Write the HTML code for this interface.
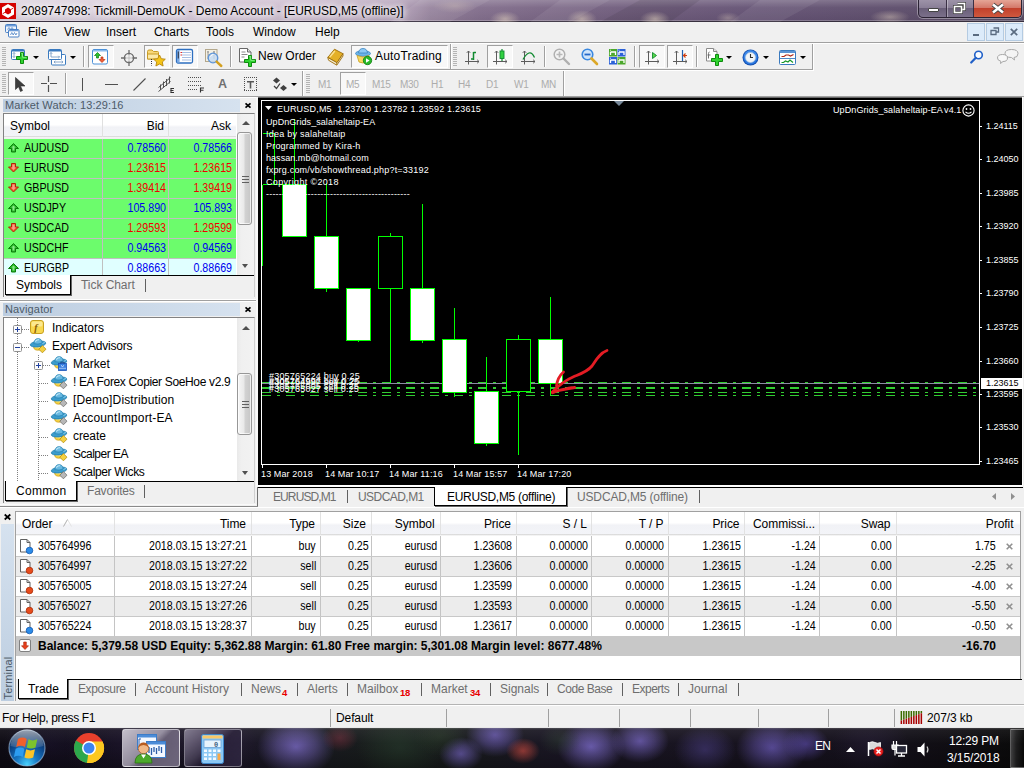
<!DOCTYPE html>
<html><head><meta charset="utf-8"><title>MT4</title>
<style>
*{box-sizing:border-box;margin:0;padding:0}
html,body{width:1024px;height:768px;overflow:hidden;background:#f0f0f0}
body{font-family:"Liberation Sans",sans-serif;font-size:12px;color:#000;position:relative}
.abs,.abs *{position:absolute}
.t{white-space:nowrap;line-height:14px}
/* title */
#title{left:0;top:0;width:1024px;height:22px;border-bottom:1px solid #3a3242;box-shadow:inset 0 -2px 0 -1px rgba(255,255,255,.28);background:linear-gradient(90deg,#dcd2de 0,#d6c8d8 180px,#cbbacd 300px,#b5a2ba 395px,#927e99 430px,#826e8c 480px,#7a6685 540px,#6e5b7b 640px,#645274 760px,#5d4d6b 900px,#574961 1024px)}
#menubar{left:0;top:22px;width:1024px;height:21px;background:#f0f0f0}
#tb1{left:0;top:0;width:1024px;height:0}
#tb2{left:0;top:0;width:1024px;height:0}
#chart{left:0;top:0;width:1024px;height:0}
#ctabs{left:0;top:0;width:1024px;height:0}
#mw{left:0;top:0;width:258px;height:0}
#nav{left:0;top:0;width:258px;height:0}
#term{left:0;top:0;width:1024px;height:0}
#status{left:0;top:0;width:1024px;height:0}
#taskbar{left:0;top:0;width:1024px;height:0}

.pb{background:#f8f8f8;border:1px solid;border-color:#a0a0a0 #fff #fff #a0a0a0}
.grip{width:4px;background:repeating-linear-gradient(180deg,#b4b4b4 0,#b4b4b4 1px,#f0f0f0 1px,#f0f0f0 2px)}
.vsep{width:2px;border-left:1px solid #a0a0a0;border-right:1px solid #fff}
.dd{width:0;height:0;border:3px solid transparent;border-top:3px solid #000;border-bottom:0}
.tf{color:#acacac;font-size:10px;line-height:12px;white-space:nowrap;letter-spacing:-.3px}
svg{overflow:visible}
.mb{width:18px;height:18px;background:#dcebfa;border:1px solid #b4cbe2}
.sbv{width:17px;background:linear-gradient(90deg,#e9e9e9,#f0f0f0 25%,#f2f2f2)}
.sbt{left:0;width:15px;border:1px solid #979797;border-radius:3px;background:linear-gradient(90deg,#f6f6f6 0,#e9e9e9 45%,#d2d2d2 55%,#c6c6c6 100%);box-shadow:inset 0 0 0 1px rgba(255,255,255,.7)}
.sbg{left:4px;width:7px;height:7px;background:repeating-linear-gradient(180deg,#606060 0,#606060 1px,transparent 1px,transparent 3px)}
.sbu{left:5px;width:0;height:0;border:4px solid transparent;border-bottom:4px solid #505050;border-top:0}
.sbd{left:5px;width:0;height:0;border:3.5px solid transparent;border-top:4px solid #505050;border-bottom:0}
.r{font-size:12.2px;transform:scaleX(.875);transform-origin:100% 50%}
.r.gl{transform-origin:0 50%}
.n{font-size:12px;letter-spacing:-.35px}
.c{color:#fff;font-size:9px;line-height:12px;letter-spacing:.2px}
.pl{letter-spacing:0}
.g{font-size:12.2px;transform:scaleX(.875);transform-origin:100% 50%}
.g.gl{transform-origin:0 50%}
</style></head><body>
<div class="abs" id="title">
<svg style="left:0;top:0" width="1024" height="22"><defs><radialGradient id="bl"><stop offset="0" stop-color="#e4d4c0" stop-opacity=".55"/><stop offset="1" stop-color="#e4d4c0" stop-opacity="0"/></radialGradient><linearGradient id="tg" x1="0" y1="0" x2="0" y2="1"><stop offset="0" stop-color="#fff" stop-opacity=".22"/><stop offset=".35" stop-color="#fff" stop-opacity=".04"/><stop offset="1" stop-color="#000" stop-opacity=".05"/></linearGradient></defs>
<rect x="0" y="0" width="1024" height="22" fill="url(#tg)"/>
<path d="M420 0h70l-40 22h-60zM560 0h50l-40 22h-40zM760 0h60l-40 22h-50z" fill="#fff" opacity=".07"/>
<path d="M640 0h60l-30 22h-70z" fill="#000" opacity=".08"/>
<ellipse cx="505" cy="19" rx="15" ry="8" fill="url(#bl)"/><ellipse cx="582" cy="19" rx="15" ry="9" fill="url(#bl)"/><ellipse cx="655" cy="19" rx="15" ry="8" fill="url(#bl)"/><ellipse cx="455" cy="6" rx="22" ry="7" fill="url(#bl)" opacity=".5"/><ellipse cx="728" cy="18" rx="12" ry="6" fill="url(#bl)" opacity=".6"/><ellipse cx="890" cy="17" rx="20" ry="7" fill="url(#bl)" opacity=".8"/>
</svg>
<svg style="left:0;top:3px" width="16" height="16" viewBox="0 0 16 16"><rect x="0" y="0" width="16" height="16" fill="#d40000"/><path d="M8 1 L14 4.5 V11.5 L8 15 L2 11.5 V4.5 Z M8 4.6 L5 6.4 V9.8 L8 11.6 L11 9.8 V6.4 Z" fill="#fff" fill-rule="evenodd"/><path d="M2.6 10.8 L5.2 9.2 M10.8 6.6 L13.4 5.0" stroke="#d40000" stroke-width="0.9"/></svg>
<span class="t" style="left:21px;top:4px;font-size:12px;letter-spacing:-.04px;text-shadow:0 0 6px #fff,0 0 6px #fff,0 0 9px #fff">2089747998: Tickmill-DemoUK - Demo Account - [EURUSD,M5 (offline)]</span>
<div style="left:918px;top:0;width:104px;height:18px;border:1px solid #2b2334;border-top:0;border-radius:0 0 5px 5px;background:linear-gradient(180deg,#9d93a8 0,#8a7f97 45%,#6a5f79 50%,#7b708a 100%);box-shadow:0 0 0 1px rgba(255,255,255,.35)">
 <div style="left:27px;top:0;width:1px;height:17px;background:#3a3045"></div><div style="left:28px;top:0;width:1px;height:17px;background:rgba(255,255,255,.35)"></div>
 <div style="left:54px;top:0;width:1px;height:17px;background:#3a3045"></div>
 <div style="left:55px;top:0;width:47px;height:17px;border-radius:0 0 4px 0;background:linear-gradient(180deg,#e5a596 0,#d4796a 45%,#c2412c 50%,#d0583e 100%)"></div>
 <div style="left:9px;top:8px;width:11px;height:4px;background:#fff;border:1px solid #444;border-radius:1px"></div>
 <svg style="left:34px;top:2px" width="14" height="12" viewBox="0 0 14 12"><path d="M4.5 1.5h7v6h-2M1.5 4.5h7v6h-7z" fill="none" stroke="#444" stroke-width="3"/><path d="M4.5 1.5h7v6h-2M1.5 4.5h7v6h-7z" fill="none" stroke="#fff" stroke-width="1.6"/></svg>
 <svg style="left:72px;top:3px" width="14" height="11" viewBox="0 0 14 11"><path d="M2 1.5 L12 9.5 M12 1.5 L2 9.5" stroke="#444" stroke-width="4.2"/><path d="M2 1.5 L12 9.5 M12 1.5 L2 9.5" stroke="#fff" stroke-width="2.6"/></svg>
</div>
</div>
<div class="abs" id="menubar">
<svg style="left:5px;top:1px" width="15" height="15" viewBox="0 0 15 15"><rect x=".5" y="1.500" width="11" height="8" rx="1" fill="#eef4fb" stroke="#4a80c4"/><path d="M1 2h10v1.500H1z" fill="#6c9cd8"/><path d="M2.500 6.500l1.500-2 1.500 2 1.500-2 1.500 2" fill="none" stroke="#4a80c4" stroke-width=".8"/><rect x="3.500" y="6.500" width="10.500" height="7.500" rx="1" fill="#fff" stroke="#4a80c4"/><path d="M4 7h9.500v1.300H4z" fill="#6c9cd8"/><path d="M5.500 12l1.300-2.500 1.400 2.500 1.300-2.500 1.400 2.500 1.100-2" fill="none" stroke="#4a80c4" stroke-width=".8"/></svg>
<span class="t" style="left:28px;top:3px">File</span><span class="t" style="left:64px;top:3px">View</span><span class="t" style="left:106px;top:3px">Insert</span><span class="t" style="left:154px;top:3px">Charts</span><span class="t" style="left:206px;top:3px">Tools</span><span class="t" style="left:253px;top:3px">Window</span><span class="t" style="left:315px;top:3px">Help</span>
<div class="mb" style="left:967px;top:1px"><div style="left:5px;top:10px;width:6px;height:2px;background:#5a6b80"></div></div>
<div class="mb" style="left:986px;top:1px"><svg style="left:3px;top:3px" width="10" height="9" viewBox="0 0 10 9"><path d="M3.500 1h5v4h-2M1 3.500h5v4h-5z" fill="none" stroke="#5a6b80" stroke-width="1.300"/></svg></div>
<div class="mb" style="left:1005px;top:1px"><svg style="left:4px;top:4px" width="8" height="8" viewBox="0 0 8 8"><path d="M.8.8l6.400 6.400M7.200.8L.8 7.200" stroke="#5a6b80" stroke-width="1.700"/></svg></div>
</div>
<div class="abs" id="tb1">
<div style="left:0;top:42px;width:1024px;height:1px;background:#a0a0a0"></div><div style="left:0;top:43px;width:1024px;height:1px;background:#fff"></div>
<div style="left:0;top:69px;width:813px;height:1px;background:#a0a0a0"></div><div style="left:0;top:70px;width:814px;height:1px;background:#fff"></div>
<div style="left:812px;top:44px;width:1px;height:26px;background:#a0a0a0"></div><div style="left:813px;top:44px;width:1px;height:27px;background:#fff"></div>
<div class="grip" style="left:2px;top:47px;height:20px"></div>
<!-- new chart -->
<svg style="left:11px;top:49px" width="18" height="16" viewBox="0 0 18 16"><rect x=".5" y=".5" width="13" height="10" rx="1" fill="#fff" stroke="#3a7abf"/><rect x="1" y="1" width="12" height="1.500" fill="#3a7abf"/><path d="M3 3.500v5M1.800 4.800L3 3.500l1.200 1.300M1.800 7.200L3 8.500l1.200-1.300" stroke="#7d9ec4" fill="none" stroke-width=".9"/><path d="M9.500 3.500h3v4h4v3h-4v4h-3v-4h-4v-3h4z" fill="#2fd32f" stroke="#0d8a0d" stroke-width="1"/><path d="M10.300 4.300h1.200v4h4" fill="none" stroke="#9cf59c" stroke-width=".8"/></svg>
<svg style="left:33px;top:56px" width="6" height="3" viewBox="0 0 6 3"><path d="M0 0h6L3 3z" fill="#000"/></svg>
<!-- profiles -->
<svg style="left:48px;top:49px" width="18" height="17" viewBox="0 0 18 17"><rect x="3.500" y="5.500" width="14" height="10.500" rx="1" fill="#fff" stroke="#3a7abf"/><path d="M6 13h9M6 13l1.300-1.200M6 13l1.300 1.200M15 13l-1.300-1.200M15 13l-1.300 1.200" stroke="#7d9ec4" fill="none" stroke-width=".9"/><rect x=".5" y=".5" width="13" height="10" rx="1" fill="#fff" stroke="#3a7abf"/><rect x="1" y="1" width="12" height="1.500" fill="#3a7abf"/><path d="M3 3.500v4.500M1.800 4.800L3 3.500l1.200 1.300M3 8h8.500M10.300 6.800L11.500 8l-1.200 1.200" stroke="#7d9ec4" fill="none" stroke-width=".9"/></svg>
<svg style="left:70px;top:56px" width="6" height="3" viewBox="0 0 6 3"><path d="M0 0h6L3 3z" fill="#000"/></svg>
<div class="vsep" style="left:83px;top:46px;height:21px"></div>
<!-- market watch -->
<div class="pb" style="left:88px;top:45px;width:26px;height:23px"></div>
<svg style="left:92px;top:49px" width="16" height="16" viewBox="0 0 16 16"><rect x=".5" y=".5" width="15" height="14.500" rx="1.500" fill="#fff" stroke="#4a90d8"/><rect x="1" y="1" width="14" height="1.500" fill="#8cbcec"/><path d="M5.500 3.500l3 3h-2v2.500h-2V6.500h-2z" fill="#2cc42c" stroke="#0c7c0c" stroke-width=".7"/><path d="M10 13.500l-3-3h2V8h2v2.500h2z" fill="#f2603a" stroke="#b83010" stroke-width=".7"/></svg>
<!-- data window -->
<svg style="left:121px;top:50px" width="16" height="16" viewBox="0 0 16 16"><path d="M8 3.500v9M3.500 8h9" stroke="#b0b0b0" stroke-width=".7"/><circle cx="8" cy="8" r="4.600" fill="none" stroke="#6c6c6c" stroke-width="1.400"/><path d="M8 0v4.500M8 11.500v4.500M0 8h4.500M11.500 8h4.500" stroke="#6c6c6c" stroke-width="1.300"/></svg>
<!-- navigator -->
<div class="pb" style="left:144px;top:45px;width:26px;height:23px"></div>
<svg style="left:147px;top:49px" width="19" height="17" viewBox="0 0 19 17"><path d="M.5 2.500q0-1.500 1.500-1.500h3l1.500 1.500h4q1 0 1 1V10H.5z" fill="#f8d878" stroke="#c89c28"/><path d="M.5 5h11v5H.5z" fill="#fbe9a8" stroke="#c89c28"/><path d="M4.500 10v6.500" stroke="#333" stroke-dasharray="1 1"/><path d="M12.500 6l1.800 3.700 4 .5-3 2.800.8 4-3.600-2-3.600 2 .8-4-3-2.800 4-.5z" fill="#f5c518" stroke="#b8860b" stroke-width=".9"/></svg>
<!-- terminal -->
<div class="pb" style="left:172px;top:45px;width:26px;height:23px"></div>
<svg style="left:176px;top:49px" width="17" height="15" viewBox="0 0 17 15"><rect x=".5" y=".5" width="16" height="13.500" rx="1.500" fill="#fff" stroke="#2d6fc0" stroke-width="1.300"/><rect x="1" y="1" width="2.600" height="12.500" fill="#78a8e4"/><path d="M2.300 2.500v7" stroke="#303848" stroke-width="1.100"/><path d="M6 3.500h9M6 6h9M6 8.500h9M6 11h9" stroke="#9cb8e0" stroke-width=".9"/><path d="M4.500 3.500h1.500M4.500 6h1.500" stroke="#e03030" stroke-width="1.200"/></svg>
<!-- strategy tester -->
<svg style="left:204px;top:48px" width="19" height="19" viewBox="0 0 19 19"><rect x="1.500" y="1.500" width="11.500" height="12" fill="#f4f0e4" stroke="#b4a88c"/><path d="M4 3v8M3 4h2M10 3v8M9 4h2M4 7h6" stroke="#909090" stroke-width=".9" fill="none"/><circle cx="9" cy="10" r="4.800" fill="#c4daf4" fill-opacity=".82" stroke="#5c94d8" stroke-width="1.300"/><path d="M6.500 8.500q1-2 3-2" stroke="#fff" stroke-width="1" fill="none"/><path d="M12.600 13.600l4.700 4.400" stroke="#d4a020" stroke-width="2.400" stroke-linecap="round"/></svg>
<div class="vsep" style="left:230px;top:46px;height:21px"></div>
<!-- new order -->
<svg style="left:239px;top:48px" width="18" height="19" viewBox="0 0 18 19"><path d="M.5.500h8l3.500 3.500V14H.5z" fill="#fff" stroke="#686868"/><path d="M8.500.500v3.500h3.500" fill="#e0e0e0" stroke="#686868"/><path d="M2.500 4h4M2.500 6.500h6M2.500 9h3" stroke="#8a8a8a"/><path d="M9.500 7.500h3v4h4v3h-4v4h-3v-4h-4v-3h4z" fill="#2fd32f" stroke="#0d8a0d"/><path d="M10.300 8.300h1.400v4h4" fill="none" stroke="#a0f8a0" stroke-width=".8"/></svg>
<span class="t" style="left:258px;top:49px">New Order</span>
<!-- metaeditor book -->
<svg style="left:327px;top:48px" width="17" height="17" viewBox="0 0 17 17"><path d="M.8 9.500L7.500 1.200l8.500 4.500-6 9z" fill="#e4b028" stroke="#9c6c08" stroke-width=".9"/><path d="M.8 9.500l.7 2.700 8.300 5 6.200-9.200V5.700l-6 9z" fill="#f4ecd0" stroke="#9c6c08" stroke-width=".9"/><path d="M2.800 9L7.800 3" stroke="#fbe090" stroke-width="1.500"/><path d="M9.800 14.800l-.3 2" stroke="#9c6c08" stroke-width=".8"/></svg>
<!-- autotrading -->
<div class="pb" style="left:351px;top:45px;width:97px;height:23px"></div>
<svg style="left:355px;top:48px" width="18" height="18" viewBox="0 0 18 18"><ellipse cx="8" cy="5.500" rx="7.500" ry="2.800" fill="#6cb4e8" stroke="#3a84c0" stroke-width=".8"/><path d="M3.500 5q.5-4.500 4.500-4.500T12.500 5z" fill="#8cc8f4" stroke="#3a84c0" stroke-width=".8"/><path d="M2 7.500q6 3 12 0l-2 6.500q-4 2-8 0z" fill="#f8d860" stroke="#c8a020" stroke-width=".8"/><circle cx="12.500" cy="12.500" r="4.200" fill="#28b828" stroke="#0c7c0c" stroke-width=".8"/><path d="M11 10.300v4.400l3.600-2.200z" fill="#fff"/></svg>
<span class="t" style="left:375px;top:49px;letter-spacing:.18px">AutoTrading</span>
<div style="left:450px;top:44px;width:1px;height:25px;background:#a0a0a0"></div><div style="left:451px;top:44px;width:1px;height:25px;background:#fff"></div>
<div class="grip" style="left:453px;top:47px;height:20px"></div>
<!-- bar chart -->
<svg style="left:465px;top:49px" width="15" height="16" viewBox="0 0 15 16"><path d="M3.500 2v13.500M1.800 3.800L3.500 2l1.700 1.800M0 12.500h14M12.200 10.800l1.800 1.700-1.800 1.700" stroke="#5c5c5c" fill="none" stroke-width="1"/><path d="M8.500 3v8M8.500 3.500h2.500M6 10h2.500" stroke="#108a30" fill="none" stroke-width="1.500"/></svg>
<!-- candle -->
<div class="pb" style="left:487px;top:45px;width:26px;height:23px"></div>
<svg style="left:493px;top:49px" width="15" height="16" viewBox="0 0 15 16"><path d="M3.500 2v13.500M1.800 3.800L3.500 2l1.700 1.800M0 12.500h14M12.200 10.800l1.800 1.700-1.800 1.700" stroke="#5c5c5c" fill="none" stroke-width="1"/><path d="M9 0v12" stroke="#108a30" stroke-width="1.200"/><rect x="7" y="2" width="4" height="7.500" fill="#30d040" stroke="#108a30" stroke-width=".9"/></svg>
<!-- line -->
<svg style="left:521px;top:49px" width="15" height="16" viewBox="0 0 15 16"><path d="M3.500 2v13.500M1.800 3.800L3.500 2l1.700 1.800M0 12.500h14M12.200 10.800l1.800 1.700-1.800 1.700" stroke="#5c5c5c" fill="none" stroke-width="1"/><path d="M2 10.500Q5 5 8 4t5.500 4.500" stroke="#108a30" fill="none" stroke-width="1.300"/></svg>
<div class="vsep" style="left:544px;top:46px;height:21px"></div>
<!-- zoom in (disabled) -->
<svg style="left:553px;top:48px" width="18" height="18" viewBox="0 0 18 18"><circle cx="6.500" cy="6.500" r="5.300" fill="#f4f4f4" stroke="#b0b0b0" stroke-width="1.500"/><path d="M3.500 6.500h6M6.500 3.500v6" stroke="#b8b8b8" stroke-width="1.700"/><path d="M10.500 10.500l5.500 5.500" stroke="#b0b0b0" stroke-width="2.400" stroke-linecap="round"/></svg>
<!-- zoom out -->
<svg style="left:581px;top:48px" width="18" height="18" viewBox="0 0 18 18"><circle cx="6.500" cy="6.500" r="5.300" fill="#cfe4fa" stroke="#3a88e0" stroke-width="1.600"/><path d="M3.500 6.500h6" stroke="#2468c8" stroke-width="1.800"/><path d="M10.500 10.500l5.500 5.500" stroke="#dca828" stroke-width="2.600" stroke-linecap="round"/></svg>
<!-- tile -->
<svg style="left:609px;top:49px" width="17" height="16" viewBox="0 0 17 16"><rect x="0" y="0" width="8" height="7.500" fill="#4ca82c"/><rect x="8.500" y="0" width="8" height="7.500" fill="#2c62d8"/><rect x="0" y="8" width="8" height="7.500" fill="#2c62d8"/><rect x="8.500" y="8" width="8" height="7.500" fill="#4ca82c"/><path d="M1.500 3h5v3M1.500 3v3M10 3h5v3M10 3v3M1.500 11h5v3M1.500 11v3M10 11h5v3M10 11v3" stroke="#fff" fill="none" stroke-width="1.300"/><path d="M1 1.200h1M9.500 1.200h1M1 9.200h1M9.500 9.200h1" stroke="#fff" stroke-width=".8"/></svg>
<div class="vsep" style="left:634px;top:46px;height:21px"></div>
<!-- autoscroll -->
<div class="pb" style="left:639px;top:45px;width:26px;height:23px"></div>
<svg style="left:645px;top:49px" width="15" height="16" viewBox="0 0 15 16"><path d="M3.500 2v13.500M1.800 3.800L3.500 2l1.700 1.800M0 12.500h14M12.200 10.800l1.800 1.700-1.800 1.700" stroke="#5c5c5c" fill="none" stroke-width="1"/><path d="M7.500 3.500l4 3-4 3z" fill="#58d848" stroke="#108a30" stroke-width=".9"/></svg>
<!-- chart shift -->
<div class="pb" style="left:667px;top:45px;width:26px;height:23px"></div>
<svg style="left:673px;top:49px" width="15" height="16" viewBox="0 0 15 16"><path d="M3.500 2v13.500M1.800 3.800L3.500 2l1.700 1.800M0 12.500h14M12.200 10.800l1.800 1.700-1.800 1.700" stroke="#5c5c5c" fill="none" stroke-width="1"/><path d="M9.500 1v11" stroke="#2060b0" stroke-width="1.200"/><path d="M14 6.500h-3.500M12.500 4.500l-2 2 2 2" stroke="#d04010" fill="none" stroke-width="1.200"/></svg>
<div class="vsep" style="left:696px;top:46px;height:21px"></div>
<!-- indicators -->
<svg style="left:706px;top:48px" width="18" height="19" viewBox="0 0 18 19"><path d="M.5.500h7l3.500 3V13H.5z" fill="#fff" stroke="#8a8a8a"/><path d="M7.500.500v3h3.500" fill="#e8e8e8" stroke="#8a8a8a"/><path d="M3.500 4q-1 0-1 1.500v5M1.500 7h3" stroke="#707070" fill="none"/><path d="M9.500 6.500h3v4h4v3h-4v4h-3v-4h-4v-3h4z" fill="#2fd32f" stroke="#0d8a0d"/></svg>
<svg style="left:726px;top:56px" width="6" height="3" viewBox="0 0 6 3"><path d="M0 0h6L3 3z" fill="#000"/></svg>
<!-- periods clock -->
<svg style="left:742px;top:49px" width="17" height="17" viewBox="0 0 17 17"><circle cx="8.500" cy="8.500" r="8" fill="#1450b0"/><circle cx="8.500" cy="8.500" r="7" fill="#2c78e0"/><circle cx="8.500" cy="7.500" r="6.500" fill="#4c98f0" fill-opacity=".6"/><circle cx="8.500" cy="8.500" r="5" fill="#f0f4f8" stroke="#b8c8d8" stroke-width=".6"/><path d="M8.500 5v3.500h2.500" stroke="#303030" fill="none" stroke-width="1.100"/></svg>
<svg style="left:763px;top:56px" width="6" height="3" viewBox="0 0 6 3"><path d="M0 0h6L3 3z" fill="#000"/></svg>
<!-- templates -->
<svg style="left:779px;top:50px" width="17" height="15" viewBox="0 0 17 15"><rect x=".5" y=".5" width="16" height="14" rx="1" fill="#fff" stroke="#3a7abf"/><rect x="1" y="1" width="15" height="2" fill="#5b94d4"/><path d="M1 8.500h15" stroke="#3a7abf" stroke-width=".9"/><path d="M2.500 6.500h2.500l2-1.500h2.500l2 1 3-1.500" stroke="#b02818" fill="none" stroke-width="1.200"/><path d="M2.500 12.500h2l2-1.500 2.500 1 2-2 3 2.500" stroke="#189828" fill="none" stroke-width="1.200"/></svg>
<svg style="left:800px;top:56px" width="6" height="3" viewBox="0 0 6 3"><path d="M0 0h6L3 3z" fill="#000"/></svg>
<!-- right: search + chat -->
<svg style="left:970px;top:50px" width="14" height="14" viewBox="0 0 14 14"><circle cx="8.500" cy="5" r="3.800" fill="#f8fbff" stroke="#2060c8" stroke-width="1.600"/><path d="M5.800 7.800L1.200 12.500" stroke="#2060c8" stroke-width="2.200" stroke-linecap="round"/></svg>
<svg style="left:997px;top:49px" width="22" height="16" viewBox="0 0 22 16"><path d="M8 4.500q0-4 6.500-4t6.500 4-4 4l.5 2.500-3-2.500Q8 8.500 8 4.500z" fill="#f4f4f4" stroke="#a8a8a8"/><path d="M.5 9q0-3.500 5-3.500t5 3.500-4.500 3.500l-2.500 2 .3-2.300Q.5 11.500.5 9z" fill="#f8f8f8" stroke="#a8a8a8"/></svg>
</div>
<div class="abs" id="tb2">
<div class="grip" style="left:2px;top:74px;height:20px"></div>
<div class="pb" style="left:8px;top:72px;width:26px;height:23px"></div>
<svg style="left:15px;top:77px" width="11" height="15" viewBox="0 0 11 15"><path d="M.5.500v12l3-2.800 2 4.800 2-.9-2-4.600h4.500z" fill="#3c3c3c" stroke="#2a2a2a" stroke-width=".6"/></svg>
<svg style="left:41px;top:76px" width="16" height="16" viewBox="0 0 16 16"><path d="M7.500 0v6M7.500 9v7M0 7.500h6M9 7.500h7" stroke="#505050" stroke-width="1.200"/></svg>
<div class="vsep" style="left:65px;top:73px;height:21px"></div>
<div style="left:82px;top:78px;width:1px;height:13px;background:#505050"></div>
<div style="left:105px;top:84px;width:13px;height:1px;background:#505050"></div>
<svg style="left:133px;top:78px" width="13" height="13" viewBox="0 0 13 13"><path d="M.5 12.500L12.500.500" stroke="#505050" stroke-width="1.100"/></svg>
<svg style="left:158px;top:76px" width="18" height="18" viewBox="0 0 18 18"><path d="M.5 11.500L12.500 1.500M.5 15.500L12.500 5.500M2.500 14V8.500M5.500 12V5.500M8.500 10V3M11.500 7.500V.500" stroke="#505050" stroke-width="1" fill="none"/><path d="M12.500 12.500h3.500M12.500 14.500h3M12.500 16.500h3.500M13 12.500v4" stroke="#303030" stroke-width="1" fill="none"/></svg>
<svg style="left:188px;top:76px" width="17" height="18" viewBox="0 0 17 18"><path d="M0 1.500h14M0 5.500h14M0 9.500h14M0 13.500h10" stroke="#505050" stroke-dasharray="1 1" stroke-width="1"/><path d="M12.500 16.500v-4.500h3.500M12.500 14.300h3" stroke="#303030" fill="none" stroke-width="1.100"/></svg>
<span class="t" style="left:218px;top:77px;font-size:12.5px;font-weight:bold;color:#707070;line-height:14px">A</span>
<svg style="left:244px;top:77px" width="14" height="14" viewBox="0 0 14 14" shape-rendering="crispEdges"><path d="M0 .500h13M0 13.500h13M.500 0v14M12.500 0v14" fill="none" stroke="#505050" stroke-dasharray="1 1"/><path d="M3 4.800h7M6.500 4.800v6.700" stroke="#585858" stroke-width="1.600" shape-rendering="auto"/></svg>
<svg style="left:272px;top:77px" width="16" height="15" viewBox="0 0 16 15"><path d="M4.500.500l3.500 3-3.500 3L1 3.500z" fill="#404040"/><path d="M11.500 8l3.500 3-3.500 3L8 11z" fill="#404040"/><path d="M2 9l2.500 2.500L8 6.500" stroke="#404040" fill="none" stroke-width="1.300"/></svg>
<svg style="left:291px;top:83px" width="6" height="3" viewBox="0 0 6 3"><path d="M0 0h6L3 3z" fill="#000"/></svg>
<div class="vsep" style="left:302px;top:71px;height:25px"></div>
<div class="grip" style="left:306px;top:74px;height:20px"></div>
<span class="tf" style="left:318px;top:79px">M1</span>
<div class="pb" style="left:340px;top:72px;width:26px;height:23px"></div>
<span class="tf" style="left:346px;top:79px">M5</span><span class="tf" style="left:372px;top:79px">M15</span><span class="tf" style="left:400px;top:79px">M30</span><span class="tf" style="left:431px;top:79px">H1</span><span class="tf" style="left:458px;top:79px">H4</span><span class="tf" style="left:486px;top:79px">D1</span><span class="tf" style="left:514px;top:79px">W1</span><span class="tf" style="left:541px;top:79px">MN</span>
<div class="vsep" style="left:563px;top:71px;height:26px"></div>
</div>
<div class="abs" id="mw">
<div style="left:0;top:96px;width:258px;height:1px;background:#a0a0a0"></div><div style="left:0;top:97px;width:256px;height:1px;background:#fff"></div>
<div style="left:3px;top:99px;width:237px;height:13px;background:linear-gradient(90deg,#bccde0,#d6e2ef)"></div>
<span class="t" style="left:5px;top:99px;font-size:11px;line-height:13px;color:#4c5a68;letter-spacing:.1px">Market Watch: 13:29:16</span>
<svg style="left:245px;top:103px" width="6" height="5" viewBox="0 0 6 5"><path d="M.5.300l5 4.400M5.500.300l-5 4.400" stroke="#000" stroke-width="1.700"/></svg>
<div style="left:3px;top:113px;width:252px;height:184px;border:1px solid #828282;border-bottom:0;border-right:1px solid #d0d0d0"></div>
<div style="left:4px;top:114px;width:232px;height:24px;background:linear-gradient(180deg,#fff 0,#fff 45%,#f1f2f6 55%,#f3f4f8 92%,#d8d8d8 93%,#fff 100%)"></div>
<div style="left:102px;top:114px;width:1px;height:23px;background:#e0e0e0"></div><div style="left:168px;top:114px;width:1px;height:23px;background:#e0e0e0"></div>
<span class="t" style="left:10px;top:119px">Symbol</span><span class="t" style="left:129px;top:119px;width:35px;text-align:right">Bid</span><span class="t" style="left:196px;top:119px;width:35px;text-align:right">Ask</span>
<div style="left:4px;top:139px;width:232px;height:19px;background:#6cfc6c"></div><div style="left:4px;top:158px;width:232px;height:1px;background:#c0c0c0"></div><svg style="left:8px;top:143px" width="11" height="10" viewBox="0 0 11 10"><path d="M5.500.500l5 5H7.500v3.500h-4V5.500H.500z" fill="#28b828" stroke="#0c7c0c" stroke-width="1" stroke-linejoin="round"/><path d="M5.500 2.600l2 2H6.400v2.800H4.600V4.600H3.500z" fill="#8ce88c"/></svg><span class="t r gl" style="left:24px;top:141px">AUDUSD</span><span class="t r" style="left:106px;top:141px;width:60px;text-align:right;color:#0000f0">0.78560</span><span class="t r" style="left:172px;top:141px;width:60px;text-align:right;color:#0000f0">0.78566</span><div style="left:4px;top:159px;width:232px;height:19px;background:#6cfc6c"></div><div style="left:4px;top:178px;width:232px;height:1px;background:#c0c0c0"></div><svg style="left:8px;top:163px" width="11" height="10" viewBox="0 0 11 10"><path d="M5.500 9l5-5H7.500V.500h-4V4H.500z" fill="#f25a30" stroke="#b02808" stroke-width="1" stroke-linejoin="round"/><path d="M4.400 1.400h2.200v3.200h1.300L5.500 7 3.100 4.600h1.300z" fill="#fca088"/></svg><span class="t r gl" style="left:24px;top:161px">EURUSD</span><span class="t r" style="left:106px;top:161px;width:60px;text-align:right;color:#f00000">1.23615</span><span class="t r" style="left:172px;top:161px;width:60px;text-align:right;color:#f00000">1.23615</span><div style="left:4px;top:179px;width:232px;height:19px;background:#6cfc6c"></div><div style="left:4px;top:198px;width:232px;height:1px;background:#c0c0c0"></div><svg style="left:8px;top:183px" width="11" height="10" viewBox="0 0 11 10"><path d="M5.500 9l5-5H7.500V.500h-4V4H.500z" fill="#f25a30" stroke="#b02808" stroke-width="1" stroke-linejoin="round"/><path d="M4.400 1.400h2.200v3.200h1.300L5.500 7 3.100 4.600h1.300z" fill="#fca088"/></svg><span class="t r gl" style="left:24px;top:181px">GBPUSD</span><span class="t r" style="left:106px;top:181px;width:60px;text-align:right;color:#f00000">1.39414</span><span class="t r" style="left:172px;top:181px;width:60px;text-align:right;color:#f00000">1.39419</span><div style="left:4px;top:199px;width:232px;height:19px;background:#6cfc6c"></div><div style="left:4px;top:218px;width:232px;height:1px;background:#c0c0c0"></div><svg style="left:8px;top:203px" width="11" height="10" viewBox="0 0 11 10"><path d="M5.500.500l5 5H7.500v3.500h-4V5.500H.500z" fill="#28b828" stroke="#0c7c0c" stroke-width="1" stroke-linejoin="round"/><path d="M5.500 2.600l2 2H6.400v2.800H4.600V4.600H3.500z" fill="#8ce88c"/></svg><span class="t r gl" style="left:24px;top:201px">USDJPY</span><span class="t r" style="left:106px;top:201px;width:60px;text-align:right;color:#0000f0">105.890</span><span class="t r" style="left:172px;top:201px;width:60px;text-align:right;color:#0000f0">105.893</span><div style="left:4px;top:219px;width:232px;height:19px;background:#6cfc6c"></div><div style="left:4px;top:238px;width:232px;height:1px;background:#c0c0c0"></div><svg style="left:8px;top:223px" width="11" height="10" viewBox="0 0 11 10"><path d="M5.500 9l5-5H7.500V.500h-4V4H.500z" fill="#f25a30" stroke="#b02808" stroke-width="1" stroke-linejoin="round"/><path d="M4.400 1.400h2.200v3.200h1.300L5.500 7 3.100 4.600h1.300z" fill="#fca088"/></svg><span class="t r gl" style="left:24px;top:221px">USDCAD</span><span class="t r" style="left:106px;top:221px;width:60px;text-align:right;color:#f00000">1.29593</span><span class="t r" style="left:172px;top:221px;width:60px;text-align:right;color:#f00000">1.29599</span><div style="left:4px;top:239px;width:232px;height:19px;background:#6cfc6c"></div><div style="left:4px;top:258px;width:232px;height:1px;background:#c0c0c0"></div><svg style="left:8px;top:243px" width="11" height="10" viewBox="0 0 11 10"><path d="M5.500.500l5 5H7.500v3.500h-4V5.500H.500z" fill="#28b828" stroke="#0c7c0c" stroke-width="1" stroke-linejoin="round"/><path d="M5.500 2.600l2 2H6.400v2.800H4.600V4.600H3.500z" fill="#8ce88c"/></svg><span class="t r gl" style="left:24px;top:241px">USDCHF</span><span class="t r" style="left:106px;top:241px;width:60px;text-align:right;color:#0000f0">0.94563</span><span class="t r" style="left:172px;top:241px;width:60px;text-align:right;color:#0000f0">0.94569</span><div style="left:4px;top:259px;width:232px;height:16px;background:#e0ffff"></div><svg style="left:8px;top:263px" width="11" height="10" viewBox="0 0 11 10"><path d="M5.500.500l5 5H7.500v3.500h-4V5.500H.500z" fill="#28b828" stroke="#0c7c0c" stroke-width="1" stroke-linejoin="round"/><path d="M5.500 2.600l2 2H6.400v2.800H4.600V4.600H3.500z" fill="#8ce88c"/></svg><span class="t r gl" style="left:24px;top:261px">EURGBP</span><span class="t r" style="left:106px;top:261px;width:60px;text-align:right;color:#0000f0">0.88663</span><span class="t r" style="left:172px;top:261px;width:60px;text-align:right;color:#0000f0">0.88669</span><div style="left:102px;top:139px;width:1px;height:136px;background:#c0c0c0"></div><div style="left:168px;top:139px;width:1px;height:136px;background:#c0c0c0"></div>
<div style="left:236px;top:114px;width:1px;height:161px;background:#fff"></div>
<div class="sbv" style="left:237px;top:114px;height:161px"><i class="sbu" style="top:7px"></i><div class="sbt" style="top:18px;height:93px"><i class="sbg" style="top:43px"></i></div><i class="sbd" style="top:150px"></i></div>
<!-- tabs -->
<div style="left:4px;top:275px;width:250px;height:22px;background:#f0f0f0"></div>
<div style="left:70px;top:275px;width:184px;height:1px;background:#000"></div>
<div style="left:5px;top:275px;width:66px;height:20px;background:#fff;border:1px solid #000;border-top:0;box-shadow:1px 1px 0 #666"></div>
<span class="t" style="left:16px;top:278px">Symbols</span><span class="t" style="left:81px;top:278px;color:#6e6e6e;letter-spacing:-.05px">Tick Chart</span>
<div style="left:145px;top:279px;width:1px;height:13px;background:#606060"></div>
<div style="left:0;top:299px;width:256px;height:1px;background:#fff"></div>
</div>
<div class="abs" id="nav">
<div style="left:0;top:300px;width:256px;height:1px;background:#a0a0a0"></div><div style="left:0;top:301px;width:256px;height:1px;background:#fff"></div>
<div style="left:3px;top:303px;width:237px;height:13px;background:linear-gradient(90deg,#bccde0,#d6e2ef)"></div>
<span class="t" style="left:5px;top:303px;font-size:11px;line-height:13px;color:#4c5a68;letter-spacing:.15px">Navigator</span>
<svg style="left:245px;top:307px" width="6" height="5" viewBox="0 0 6 5"><path d="M.5.300l5 4.400M5.500.300l-5 4.400" stroke="#000" stroke-width="1.700"/></svg>
<div style="left:3px;top:317px;width:252px;height:186px;border:1px solid #828282;border-bottom:0;border-right:1px solid #d0d0d0"></div>
<div style="left:4px;top:318px;width:233px;height:163px;background:#fff"></div>
<div style="left:17px;top:318px;width:1px;height:164px;background:repeating-linear-gradient(180deg,#808080 0,#808080 1px,transparent 1px,transparent 2px)"></div><div style="left:38px;top:355px;width:1px;height:127px;background:repeating-linear-gradient(180deg,#808080 0,#808080 1px,transparent 1px,transparent 2px)"></div><div style="left:22px;top:329px;width:7px;height:1px;background:repeating-linear-gradient(90deg,#808080 0,#808080 1px,transparent 1px,transparent 2px)"></div><svg style="left:13px;top:325px" width="9" height="9" viewBox="0 0 9 9"><rect x=".5" y=".5" width="8" height="8" rx="1" fill="#fcfcfc" stroke="#909090"/><path d="M2 4.500h5" stroke="#2040a0"/><path d="M4.500 2v5" stroke="#2040a0"/></svg><svg style="left:30px;top:320px" width="14" height="14" viewBox="0 0 14 14"><rect x=".5" y=".5" width="13" height="13" rx="2.500" fill="#f8d850" stroke="#c8a020"/><rect x="1.500" y="1.500" width="11" height="5" rx="1.500" fill="#fce890"/><text x="4.300" y="10.500" font-family="Liberation Serif,serif" font-style="italic" font-weight="bold" font-size="10" fill="#8a5c00">f</text></svg><span class="t n" style="left:52px;top:321px;letter-spacing:0px">Indicators</span><div style="left:22px;top:347px;width:7px;height:1px;background:repeating-linear-gradient(90deg,#808080 0,#808080 1px,transparent 1px,transparent 2px)"></div><svg style="left:13px;top:343px" width="9" height="9" viewBox="0 0 9 9"><rect x=".5" y=".5" width="8" height="8" rx="1" fill="#fcfcfc" stroke="#909090"/><path d="M2 4.500h5" stroke="#2040a0"/></svg><svg style="left:30px;top:337px" width="17" height="17" viewBox="0 0 17 17"><g transform="translate(0 1)"><path d="M3.500 8q4.500 1.500 8.500 0 .3 4.200-4.200 4.200T3.500 8z" fill="#f4d040" stroke="#c89c18" stroke-width=".7"/><path d="M5 9.200q3 1 5.500 0" stroke="#fbe88c" stroke-width="1" fill="none"/><ellipse cx="8" cy="6" rx="7.800" ry="2.900" transform="rotate(-7 8 6)" fill="#3c9ccc" stroke="#1c7cac" stroke-width=".7"/><path d="M3.900 5.600Q4.200.600 8 .600T12.100 5Q8 6.800 3.900 5.600z" fill="#68b8e0" stroke="#1c7cac" stroke-width=".6"/><path d="M5.600 3.200Q6.500 1.600 8.600 1.700" stroke="#c8ecfa" stroke-width="1.100" fill="none" stroke-linecap="round"/><path d="M12.500 5.500q2-.6 2.800-1.800" stroke="#a8dcf4" stroke-width=".8" fill="none"/></g><path d="M12.400 8.600L16 12.200 12.400 15.800 8.800 12.200z" fill="#f4d040" stroke="#b89010" stroke-width=".8"/></svg><span class="t n" style="left:52px;top:339px;letter-spacing:-0.2px">Expert Advisors</span><div style="left:43px;top:365px;width:7px;height:1px;background:repeating-linear-gradient(90deg,#808080 0,#808080 1px,transparent 1px,transparent 2px)"></div><svg style="left:34px;top:361px" width="9" height="9" viewBox="0 0 9 9"><rect x=".5" y=".5" width="8" height="8" rx="1" fill="#fcfcfc" stroke="#909090"/><path d="M2 4.500h5" stroke="#2040a0"/><path d="M4.500 2v5" stroke="#2040a0"/></svg><svg style="left:51px;top:355px" width="17" height="17" viewBox="0 0 17 17"><g transform="translate(0 1)"><path d="M3.500 8q4.500 1.500 8.500 0 .3 4.200-4.200 4.200T3.500 8z" fill="#f4d040" stroke="#c89c18" stroke-width=".7"/><path d="M5 9.200q3 1 5.500 0" stroke="#fbe88c" stroke-width="1" fill="none"/><ellipse cx="8" cy="6" rx="7.800" ry="2.900" transform="rotate(-7 8 6)" fill="#3c9ccc" stroke="#1c7cac" stroke-width=".7"/><path d="M3.900 5.600Q4.200.600 8 .600T12.100 5Q8 6.800 3.900 5.600z" fill="#68b8e0" stroke="#1c7cac" stroke-width=".6"/><path d="M5.600 3.200Q6.500 1.600 8.600 1.700" stroke="#c8ecfa" stroke-width="1.100" fill="none" stroke-linecap="round"/><path d="M12.500 5.500q2-.6 2.800-1.800" stroke="#a8dcf4" stroke-width=".8" fill="none"/></g><rect x="7.500" y="8.500" width="8" height="7" fill="#3a80e0" stroke="#1c54b8" stroke-width=".8"/><path d="M9.800 8.500v-1.300h3.400v1.300" fill="none" stroke="#1c3c80" stroke-width=".9"/><path d="M10 10.500q1.500 2 3 0" fill="none" stroke="#e0ecff" stroke-width=".9"/><path d="M8 13.300h7" stroke="#a8c8f8" stroke-width=".9"/></svg><span class="t n" style="left:73px;top:357px;letter-spacing:0.05px">Market</span><div style="left:39px;top:383px;width:10px;height:1px;background:repeating-linear-gradient(90deg,#808080 0,#808080 1px,transparent 1px,transparent 2px)"></div><svg style="left:51px;top:373px" width="17" height="17" viewBox="0 0 17 17"><g transform="translate(0 1)"><path d="M3.500 8q4.500 1.500 8.500 0 .3 4.200-4.200 4.200T3.500 8z" fill="#f4d040" stroke="#c89c18" stroke-width=".7"/><path d="M5 9.200q3 1 5.500 0" stroke="#fbe88c" stroke-width="1" fill="none"/><ellipse cx="8" cy="6" rx="7.800" ry="2.900" transform="rotate(-7 8 6)" fill="#3c9ccc" stroke="#1c7cac" stroke-width=".7"/><path d="M3.900 5.600Q4.200.600 8 .600T12.100 5Q8 6.800 3.900 5.600z" fill="#68b8e0" stroke="#1c7cac" stroke-width=".6"/><path d="M5.600 3.200Q6.500 1.600 8.600 1.700" stroke="#c8ecfa" stroke-width="1.100" fill="none" stroke-linecap="round"/><path d="M12.500 5.500q2-.6 2.800-1.800" stroke="#a8dcf4" stroke-width=".8" fill="none"/></g><path d="M12.400 8.600L16 12.200 12.400 15.800 8.800 12.200z" fill="#b8b8b8" stroke="#707070" stroke-width=".8"/></svg><span class="t n" style="left:73px;top:375px">! EA Forex Copier SoeHoe v2.9</span><div style="left:39px;top:401px;width:10px;height:1px;background:repeating-linear-gradient(90deg,#808080 0,#808080 1px,transparent 1px,transparent 2px)"></div><svg style="left:51px;top:391px" width="17" height="17" viewBox="0 0 17 17"><g transform="translate(0 1)"><path d="M3.500 8q4.500 1.500 8.500 0 .3 4.200-4.200 4.200T3.500 8z" fill="#f4d040" stroke="#c89c18" stroke-width=".7"/><path d="M5 9.200q3 1 5.500 0" stroke="#fbe88c" stroke-width="1" fill="none"/><ellipse cx="8" cy="6" rx="7.800" ry="2.900" transform="rotate(-7 8 6)" fill="#3c9ccc" stroke="#1c7cac" stroke-width=".7"/><path d="M3.900 5.600Q4.200.600 8 .600T12.100 5Q8 6.800 3.900 5.600z" fill="#68b8e0" stroke="#1c7cac" stroke-width=".6"/><path d="M5.600 3.200Q6.500 1.600 8.600 1.700" stroke="#c8ecfa" stroke-width="1.100" fill="none" stroke-linecap="round"/><path d="M12.500 5.500q2-.6 2.800-1.800" stroke="#a8dcf4" stroke-width=".8" fill="none"/></g><path d="M12.400 8.600L16 12.200 12.400 15.800 8.800 12.200z" fill="#b8b8b8" stroke="#707070" stroke-width=".8"/></svg><span class="t n" style="left:73px;top:393px;letter-spacing:0.15px">[Demo]Distribution</span><div style="left:39px;top:419px;width:10px;height:1px;background:repeating-linear-gradient(90deg,#808080 0,#808080 1px,transparent 1px,transparent 2px)"></div><svg style="left:51px;top:409px" width="17" height="17" viewBox="0 0 17 17"><g transform="translate(0 1)"><path d="M3.500 8q4.500 1.500 8.500 0 .3 4.200-4.200 4.200T3.500 8z" fill="#f4d040" stroke="#c89c18" stroke-width=".7"/><path d="M5 9.200q3 1 5.500 0" stroke="#fbe88c" stroke-width="1" fill="none"/><ellipse cx="8" cy="6" rx="7.800" ry="2.900" transform="rotate(-7 8 6)" fill="#3c9ccc" stroke="#1c7cac" stroke-width=".7"/><path d="M3.900 5.600Q4.200.600 8 .600T12.100 5Q8 6.800 3.900 5.600z" fill="#68b8e0" stroke="#1c7cac" stroke-width=".6"/><path d="M5.600 3.200Q6.500 1.600 8.600 1.700" stroke="#c8ecfa" stroke-width="1.100" fill="none" stroke-linecap="round"/><path d="M12.500 5.500q2-.6 2.800-1.800" stroke="#a8dcf4" stroke-width=".8" fill="none"/></g><path d="M12.400 8.600L16 12.200 12.400 15.800 8.800 12.200z" fill="#b8b8b8" stroke="#707070" stroke-width=".8"/></svg><span class="t n" style="left:73px;top:411px;letter-spacing:0.15px">AccountImport-EA</span><div style="left:39px;top:437px;width:10px;height:1px;background:repeating-linear-gradient(90deg,#808080 0,#808080 1px,transparent 1px,transparent 2px)"></div><svg style="left:51px;top:427px" width="17" height="17" viewBox="0 0 17 17"><g transform="translate(0 1)"><path d="M3.500 8q4.500 1.500 8.500 0 .3 4.200-4.200 4.200T3.500 8z" fill="#f4d040" stroke="#c89c18" stroke-width=".7"/><path d="M5 9.200q3 1 5.500 0" stroke="#fbe88c" stroke-width="1" fill="none"/><ellipse cx="8" cy="6" rx="7.800" ry="2.900" transform="rotate(-7 8 6)" fill="#3c9ccc" stroke="#1c7cac" stroke-width=".7"/><path d="M3.900 5.600Q4.200.600 8 .600T12.100 5Q8 6.800 3.900 5.600z" fill="#68b8e0" stroke="#1c7cac" stroke-width=".6"/><path d="M5.600 3.200Q6.500 1.600 8.600 1.700" stroke="#c8ecfa" stroke-width="1.100" fill="none" stroke-linecap="round"/><path d="M12.500 5.500q2-.6 2.800-1.800" stroke="#a8dcf4" stroke-width=".8" fill="none"/></g><path d="M12.400 8.600L16 12.200 12.400 15.800 8.800 12.200z" fill="#f4d040" stroke="#b89010" stroke-width=".8"/></svg><span class="t n" style="left:73px;top:429px;letter-spacing:-0.1px">create</span><div style="left:39px;top:455px;width:10px;height:1px;background:repeating-linear-gradient(90deg,#808080 0,#808080 1px,transparent 1px,transparent 2px)"></div><svg style="left:51px;top:445px" width="17" height="17" viewBox="0 0 17 17"><g transform="translate(0 1)"><path d="M3.500 8q4.500 1.500 8.500 0 .3 4.200-4.200 4.200T3.500 8z" fill="#f4d040" stroke="#c89c18" stroke-width=".7"/><path d="M5 9.200q3 1 5.500 0" stroke="#fbe88c" stroke-width="1" fill="none"/><ellipse cx="8" cy="6" rx="7.800" ry="2.900" transform="rotate(-7 8 6)" fill="#3c9ccc" stroke="#1c7cac" stroke-width=".7"/><path d="M3.900 5.600Q4.200.600 8 .600T12.100 5Q8 6.800 3.900 5.600z" fill="#68b8e0" stroke="#1c7cac" stroke-width=".6"/><path d="M5.600 3.200Q6.500 1.600 8.600 1.700" stroke="#c8ecfa" stroke-width="1.100" fill="none" stroke-linecap="round"/><path d="M12.500 5.500q2-.6 2.800-1.800" stroke="#a8dcf4" stroke-width=".8" fill="none"/></g><path d="M12.400 8.600L16 12.200 12.400 15.800 8.800 12.200z" fill="#f4d040" stroke="#b89010" stroke-width=".8"/></svg><span class="t n" style="left:73px;top:447px;letter-spacing:-0.5px">Scalper EA</span><div style="left:39px;top:473px;width:10px;height:1px;background:repeating-linear-gradient(90deg,#808080 0,#808080 1px,transparent 1px,transparent 2px)"></div><svg style="left:51px;top:463px" width="17" height="17" viewBox="0 0 17 17"><g transform="translate(0 1)"><path d="M3.500 8q4.500 1.500 8.500 0 .3 4.200-4.200 4.200T3.500 8z" fill="#f4d040" stroke="#c89c18" stroke-width=".7"/><path d="M5 9.200q3 1 5.500 0" stroke="#fbe88c" stroke-width="1" fill="none"/><ellipse cx="8" cy="6" rx="7.800" ry="2.900" transform="rotate(-7 8 6)" fill="#3c9ccc" stroke="#1c7cac" stroke-width=".7"/><path d="M3.900 5.600Q4.200.600 8 .600T12.100 5Q8 6.800 3.900 5.600z" fill="#68b8e0" stroke="#1c7cac" stroke-width=".6"/><path d="M5.600 3.200Q6.500 1.600 8.600 1.700" stroke="#c8ecfa" stroke-width="1.100" fill="none" stroke-linecap="round"/><path d="M12.500 5.500q2-.6 2.800-1.800" stroke="#a8dcf4" stroke-width=".8" fill="none"/></g><path d="M12.400 8.600L16 12.200 12.400 15.800 8.800 12.200z" fill="#b8b8b8" stroke="#707070" stroke-width=".8"/></svg><span class="t n" style="left:73px;top:465px">Scalper Wicks</span><div style="left:237px;top:318px;width:17px;height:163px;background:#f0f0f0"></div>
<div class="sbv" style="left:237px;top:318px;height:163px"><i class="sbu" style="top:8px"></i><div class="sbt" style="top:55px;height:62px"><i class="sbg" style="top:27px"></i></div><i class="sbd" style="top:153px"></i></div>
<div style="left:4px;top:481px;width:250px;height:23px;background:#f0f0f0"></div>
<div style="left:76px;top:481px;width:178px;height:1px;background:#000"></div>
<div style="left:5px;top:481px;width:72px;height:20px;background:#fff;border:1px solid #000;border-top:0;box-shadow:1px 1px 0 #666"></div>
<span class="t" style="left:16px;top:484px;letter-spacing:0.3px">Common</span><span class="t" style="left:87px;top:484px;color:#6e6e6e;letter-spacing:-0.2px">Favorites</span>
<div style="left:144px;top:485px;width:1px;height:13px;background:#606060"></div>
</div>
<div class="abs" id="chart">
<div style="left:258px;top:96px;width:766px;height:1px;background:#a0a0a0"></div>
<div style="left:256px;top:97px;width:2px;height:391px;background:#f8f8f8"></div>
<div style="left:258px;top:97px;width:764px;height:1px;background:#696969"></div><div style="left:258px;top:98px;width:764px;height:387px;background:#000"></div>
<div style="left:1022px;top:97px;width:1px;height:390px;background:#fff"></div>
<div style="left:258px;top:485px;width:765px;height:2px;background:#fff"></div>
<div style="left:258px;top:487px;width:765px;height:1px;background:#000"></div>
<div style="left:261px;top:100px;width:719px;height:365px;border:1px solid #fff"></div>
<svg style="left:0;top:0" width="1024" height="490" shape-rendering="crispEdges">
<path d="M262 382.5H979" stroke="#32cd32" stroke-width="1" stroke-dasharray="9 6 3 6" stroke-dashoffset="0"/><path d="M262 388.0H979" stroke="#32cd32" stroke-width="2" stroke-dasharray="9 6 3 6" stroke-dashoffset="0"/><path d="M262 392.5H979" stroke="#32cd32" stroke-width="1" stroke-dasharray="9 6 3 6" stroke-dashoffset="0"/><path d="M262 395.5H979" stroke="#32cd32" stroke-width="1" stroke-dasharray="9 6 3 6" stroke-dashoffset="0"/><path d="M262 383.500H979" stroke="#8c8ca4" stroke-width="1"/>
<g stroke="#00ff00" stroke-width="1" fill="none">
<path d="M262.500 133.500H274.500V184.500H262.500M262.500 184.500V266M262.500 184.500H282"/>
<path d="M294.500 119V236"/><rect x="282.500" y="184.500" width="24" height="52" fill="#fff"/>
<path d="M326.500 183V292"/><rect x="314.500" y="236.500" width="24" height="52" fill="#fff"/>
<path d="M358.500 288V342"/><rect x="346.500" y="288.500" width="24" height="52" fill="#fff"/>
<path d="M390.500 233V383"/><rect x="378.500" y="236.500" width="24" height="52" fill="#000"/>
<path d="M422.500 204V343"/><rect x="410.500" y="288.500" width="24" height="52" fill="#fff"/>
<path d="M454.500 308V397"/><rect x="442.500" y="339.500" width="24" height="53" fill="#fff"/>
<path d="M486.500 357V446"/><rect x="474.500" y="391.500" width="24" height="52" fill="#fff"/>
<path d="M518.500 335V455"/><rect x="506.500" y="339.500" width="24" height="52" fill="#000"/>
<path d="M550.500 297V395"/><rect x="538.500" y="339.500" width="24" height="44" fill="#fff"/>
</g>
<path d="M980 126.500h2" stroke="#fff"/><path d="M980 159.500h2" stroke="#fff"/><path d="M980 193.500h2" stroke="#fff"/><path d="M980 226.500h2" stroke="#fff"/><path d="M980 260.500h2" stroke="#fff"/><path d="M980 293.500h2" stroke="#fff"/><path d="M980 327.500h2" stroke="#fff"/><path d="M980 361.500h2" stroke="#fff"/><path d="M980 394.500h2" stroke="#fff"/><path d="M980 427.500h2" stroke="#fff"/><path d="M980 461.500h2" stroke="#fff"/><path d="M262.500 465v3" stroke="#fff"/><path d="M326.500 465v3" stroke="#fff"/><path d="M390.500 465v3" stroke="#fff"/><path d="M454.500 465v3" stroke="#fff"/><path d="M518.500 465v3" stroke="#fff"/><path d="M614 101h10l-5 5z" fill="#778899" shape-rendering="auto"/><path d="M265 106h7l-3.500 4z" fill="#fff" shape-rendering="auto"/></svg>
<svg style="left:0;top:0" width="1024" height="490"><g fill="none" stroke="#e41c24" stroke-linecap="round" stroke-linejoin="round"><path d="M607 350.500C600 353 596 360 592 366 587 372 580 374 573 377 566 380 560 384 552.500 392" stroke-width="2.800"/><path d="M563.500 372C559 376 557 381 556.500 386" stroke-width="2.800"/><path d="M552.500 392.500C558 390 563 389.500 566 389 570 388 572 388 574.500 387.500" stroke-width="3.200"/></g></svg>
<span class="t c" style="left:277px;top:103px">EURUSD,M5&nbsp; 1.23700 1.23782 1.23592 1.23615</span><span class="t c" style="left:266px;top:116px;letter-spacing:0.07px">UpDnGrids_salaheltaip-EA</span><span class="t c" style="left:266px;top:128px;letter-spacing:0.24px">Idea by salaheltaip</span><span class="t c" style="left:266px;top:140px;letter-spacing:0.2px">Programmed by Kira-h</span><span class="t c" style="left:266px;top:152px;letter-spacing:0.05px">hassan.mb@hotmail.com</span><span class="t c" style="left:266px;top:164px">fxprg.com/vb/showthread.php?t=33192</span><span class="t c" style="left:266px;top:176px;letter-spacing:0.34px">Copyright ©2018</span><span class="t c" style="left:266px;top:188px">---------------------------------------------</span><span class="t c" style="left:833px;top:104px;letter-spacing:.1px;word-spacing:-1px">UpDnGrids_salaheltaip-EA v4.1</span><svg style="left:962px;top:104px" width="13" height="13" viewBox="0 0 13 13"><circle cx="6.500" cy="6.500" r="5.600" fill="none" stroke="#fff" stroke-width="1.100"/><circle cx="4.500" cy="5" r=".9" fill="#fff"/><circle cx="8.500" cy="5" r=".9" fill="#fff"/><path d="M3.500 7.800q3 3 6 0" fill="none" stroke="#fff" stroke-width="1.100"/></svg><span class="t c pl" style="left:986px;top:120px">1.24115</span><span class="t c pl" style="left:986px;top:153px">1.24050</span><span class="t c pl" style="left:986px;top:187px">1.23985</span><span class="t c pl" style="left:986px;top:220px">1.23920</span><span class="t c pl" style="left:986px;top:254px">1.23855</span><span class="t c pl" style="left:986px;top:287px">1.23790</span><span class="t c pl" style="left:986px;top:321px">1.23725</span><span class="t c pl" style="left:986px;top:355px">1.23660</span><span class="t c pl" style="left:986px;top:388px">1.23595</span><span class="t c pl" style="left:986px;top:421px">1.23530</span><span class="t c pl" style="left:986px;top:455px">1.23465</span><div style="left:981px;top:378px;width:41px;height:11px;background:#fff"></div><span class="t c pl" style="left:986px;top:377px;color:#000">1.23615</span><span class="t c" style="left:261px;top:468px;letter-spacing:.12px">13 Mar 2018</span><span class="t c" style="left:325px;top:468px;letter-spacing:.12px">14 Mar 10:17</span><span class="t c" style="left:389px;top:468px;letter-spacing:.12px">14 Mar 11:16</span><span class="t c" style="left:453px;top:468px;letter-spacing:.12px">14 Mar 15:57</span><span class="t c" style="left:517px;top:468px;letter-spacing:.12px">14 Mar 17:20</span><span class="t c" style="left:269px;top:370px;letter-spacing:.2px">#305765224 buy 0.25</span><span class="t c" style="left:269px;top:375px;letter-spacing:.2px">#305764996 buy 0.25</span><span class="t c" style="left:269px;top:376px;letter-spacing:.2px">#305764997 sell 0.25</span><span class="t c" style="left:269px;top:380px;letter-spacing:.2px">#305765005 sell 0.25</span><span class="t c" style="left:269px;top:383px;letter-spacing:.2px">#305765027 sell 0.25</span></div>
<div class="abs" id="ctabs">
<div style="left:257px;top:487px;width:1px;height:20px;background:#707070"></div>
<div style="left:434px;top:487px;width:133px;height:19px;background:#fff;border:1px solid #000;border-top:0;box-shadow:1px 1px 0 #666"></div>
<span class="t" style="left:273px;top:490px;color:#6e6e6e;letter-spacing:-.9px">EURUSD,M1</span>
<div style="left:347px;top:490px;width:1px;height:13px;background:#606060"></div>
<span class="t" style="left:358px;top:490px;color:#6e6e6e;letter-spacing:-.55px">USDCAD,M1</span>
<span class="t" style="left:447px;top:490px;letter-spacing:-.3px">EURUSD,M5 (offline)</span>
<span class="t" style="left:577px;top:490px;color:#6e6e6e;letter-spacing:-.15px">USDCAD,M5 (offline)</span>
<div style="left:699px;top:490px;width:1px;height:13px;background:#606060"></div>
<svg style="left:992px;top:493px" width="4" height="7" viewBox="0 0 4 7"><path d="M4 0v7L0 3.500z" fill="#909090"/></svg>
<svg style="left:1011px;top:493px" width="4" height="7" viewBox="0 0 4 7"><path d="M0 0v7l4-3.500z" fill="#909090"/></svg>
<div style="left:0;top:504px;width:256px;height:1px;background:#fafafa"></div><div style="left:0;top:506px;width:258px;height:1px;background:#8a8a8a"></div><div style="left:0;top:507px;width:1024px;height:1px;background:#fff"></div>
</div>
<div class="abs" id="term">
<svg style="left:4px;top:514px" width="7" height="6" viewBox="0 0 7 6"><path d="M.7.500l5.600 5M6.300.500l-5.600 5" stroke="#000" stroke-width="1.700"/></svg>
<div style="left:1px;top:524px;width:13px;height:177px;background:linear-gradient(180deg,#d6e2ef,#bccde0)"></div>
<span class="t" style="left:-17px;top:668px;width:50px;height:13px;font-size:11px;line-height:13px;color:#4c5a68;transform:rotate(-90deg);letter-spacing:.15px">Terminal</span>
<div style="left:15px;top:511px;width:1006px;height:168px;background:#fff;border:1px solid #a0a0a0;border-bottom:0"></div>
<div style="left:16px;top:512px;width:1004px;height:24px;background:linear-gradient(180deg,#fff 0,#fff 45%,#f1f2f6 55%,#f3f4f8 92%,#d8d8d8 93%,#fff 100%)"></div>
<div style="left:114px;top:512px;width:1px;height:23px;background:#e2e2e2"></div><div style="left:251px;top:512px;width:1px;height:23px;background:#e2e2e2"></div><div style="left:320px;top:512px;width:1px;height:23px;background:#e2e2e2"></div><div style="left:371px;top:512px;width:1px;height:23px;background:#e2e2e2"></div><div style="left:440px;top:512px;width:1px;height:23px;background:#e2e2e2"></div><div style="left:516px;top:512px;width:1px;height:23px;background:#e2e2e2"></div><div style="left:591px;top:512px;width:1px;height:23px;background:#e2e2e2"></div><div style="left:668px;top:512px;width:1px;height:23px;background:#e2e2e2"></div><div style="left:744px;top:512px;width:1px;height:23px;background:#e2e2e2"></div><div style="left:819px;top:512px;width:1px;height:23px;background:#e2e2e2"></div><div style="left:896px;top:512px;width:1px;height:23px;background:#e2e2e2"></div><span class="t" style="left:22px;top:517px;letter-spacing:-.05px">Order</span><span class="t" style="right:778px;top:517px;letter-spacing:-.05px">Time</span><span class="t" style="right:709px;top:517px;letter-spacing:-.05px">Type</span><span class="t" style="right:658px;top:517px;letter-spacing:-.05px">Size</span><span class="t" style="right:589.5px;top:517px;letter-spacing:-.05px">Symbol</span><span class="t" style="right:513px;top:517px;letter-spacing:-.05px">Price</span><span class="t" style="right:437px;top:517px;letter-spacing:-.05px">S / L</span><span class="t" style="right:360.5px;top:517px;letter-spacing:-.05px">T / P</span><span class="t" style="right:284.5px;top:517px;letter-spacing:-.05px">Price</span><span class="t" style="left:753px;top:517px;letter-spacing:-.05px">Commissi...</span><span class="t" style="right:133.5px;top:517px;letter-spacing:-.05px">Swap</span><span class="t" style="right:10.5px;top:517px;letter-spacing:-.05px">Profit</span><svg style="left:63px;top:519px" width="9" height="8" viewBox="0 0 9 8"><path d="M.5 7.500L4.500.500l4 7" fill="none" stroke="#e4e4e4"/><path d="M.5 7.500L4.500.500" stroke="#b8b8b8"/></svg><div style="left:16px;top:536px;width:1004px;height:20px;background:#fff"></div><svg style="left:19px;top:539px" width="15" height="16" viewBox="0 0 15 16"><path d="M1.500.500h6.500l3 3v9.500h-9.500z" fill="#fff" stroke="#606060"/><path d="M8 .500v3h3" fill="none" stroke="#606060"/><circle cx="10.500" cy="11.500" r="3.300" fill="#2c8ce8" stroke="#1058b0" stroke-width=".8"/></svg><span class="t g gl" style="left:38px;top:539px">305764996</span><span class="t g" style="right:777px;top:539px">2018.03.15 13:27:21</span><span class="t g" style="right:708px;top:539px">buy</span><span class="t g" style="right:655px;top:539px">0.25</span><span class="t g" style="right:587px;top:539px">eurusd</span><span class="t g" style="right:512px;top:539px">1.23608</span><span class="t g" style="right:435.5px;top:539px">0.00000</span><span class="t g" style="right:359.5px;top:539px">0.00000</span><span class="t g" style="right:283px;top:539px">1.23615</span><span class="t g" style="right:208px;top:539px">-1.24</span><span class="t g" style="right:132px;top:539px">0.00</span><span class="t g" style="right:28px;top:539px">1.75</span><svg style="left:1006px;top:543px" width="7" height="7" viewBox="0 0 7 7"><path d="M.7.700l5.600 5.600M6.300.700L.7 6.300" stroke="#909090" stroke-width="1.600"/></svg><div style="left:16px;top:556px;width:1004px;height:20px;background:#ececec"></div><svg style="left:19px;top:559px" width="15" height="16" viewBox="0 0 15 16"><path d="M1.500.500h6.500l3 3v9.500h-9.500z" fill="#fff" stroke="#606060"/><path d="M8 .500v3h3" fill="none" stroke="#606060"/><circle cx="10.500" cy="11.500" r="3.300" fill="#e84c1c" stroke="#a82c08" stroke-width=".8"/></svg><span class="t g gl" style="left:38px;top:559px">305764997</span><span class="t g" style="right:777px;top:559px">2018.03.15 13:27:22</span><span class="t g" style="right:708px;top:559px">sell</span><span class="t g" style="right:655px;top:559px">0.25</span><span class="t g" style="right:587px;top:559px">eurusd</span><span class="t g" style="right:512px;top:559px">1.23606</span><span class="t g" style="right:435.5px;top:559px">0.00000</span><span class="t g" style="right:359.5px;top:559px">0.00000</span><span class="t g" style="right:283px;top:559px">1.23615</span><span class="t g" style="right:208px;top:559px">-1.24</span><span class="t g" style="right:132px;top:559px">0.00</span><span class="t g" style="right:28px;top:559px">-2.25</span><svg style="left:1006px;top:563px" width="7" height="7" viewBox="0 0 7 7"><path d="M.7.700l5.600 5.600M6.300.700L.7 6.300" stroke="#909090" stroke-width="1.600"/></svg><div style="left:16px;top:576px;width:1004px;height:20px;background:#fff"></div><svg style="left:19px;top:579px" width="15" height="16" viewBox="0 0 15 16"><path d="M1.500.500h6.500l3 3v9.500h-9.500z" fill="#fff" stroke="#606060"/><path d="M8 .500v3h3" fill="none" stroke="#606060"/><circle cx="10.500" cy="11.500" r="3.300" fill="#e84c1c" stroke="#a82c08" stroke-width=".8"/></svg><span class="t g gl" style="left:38px;top:579px">305765005</span><span class="t g" style="right:777px;top:579px">2018.03.15 13:27:24</span><span class="t g" style="right:708px;top:579px">sell</span><span class="t g" style="right:655px;top:579px">0.25</span><span class="t g" style="right:587px;top:579px">eurusd</span><span class="t g" style="right:512px;top:579px">1.23599</span><span class="t g" style="right:435.5px;top:579px">0.00000</span><span class="t g" style="right:359.5px;top:579px">0.00000</span><span class="t g" style="right:283px;top:579px">1.23615</span><span class="t g" style="right:208px;top:579px">-1.24</span><span class="t g" style="right:132px;top:579px">0.00</span><span class="t g" style="right:28px;top:579px">-4.00</span><svg style="left:1006px;top:583px" width="7" height="7" viewBox="0 0 7 7"><path d="M.7.700l5.600 5.600M6.300.700L.7 6.300" stroke="#909090" stroke-width="1.600"/></svg><div style="left:16px;top:596px;width:1004px;height:20px;background:#ececec"></div><svg style="left:19px;top:599px" width="15" height="16" viewBox="0 0 15 16"><path d="M1.500.500h6.500l3 3v9.500h-9.500z" fill="#fff" stroke="#606060"/><path d="M8 .500v3h3" fill="none" stroke="#606060"/><circle cx="10.500" cy="11.500" r="3.300" fill="#e84c1c" stroke="#a82c08" stroke-width=".8"/></svg><span class="t g gl" style="left:38px;top:599px">305765027</span><span class="t g" style="right:777px;top:599px">2018.03.15 13:27:26</span><span class="t g" style="right:708px;top:599px">sell</span><span class="t g" style="right:655px;top:599px">0.25</span><span class="t g" style="right:587px;top:599px">eurusd</span><span class="t g" style="right:512px;top:599px">1.23593</span><span class="t g" style="right:435.5px;top:599px">0.00000</span><span class="t g" style="right:359.5px;top:599px">0.00000</span><span class="t g" style="right:283px;top:599px">1.23615</span><span class="t g" style="right:208px;top:599px">-1.24</span><span class="t g" style="right:132px;top:599px">0.00</span><span class="t g" style="right:28px;top:599px">-5.50</span><svg style="left:1006px;top:603px" width="7" height="7" viewBox="0 0 7 7"><path d="M.7.700l5.600 5.600M6.300.700L.7 6.300" stroke="#909090" stroke-width="1.600"/></svg><div style="left:16px;top:616px;width:1004px;height:20px;background:#fff"></div><svg style="left:19px;top:619px" width="15" height="16" viewBox="0 0 15 16"><path d="M1.500.500h6.500l3 3v9.500h-9.500z" fill="#fff" stroke="#606060"/><path d="M8 .500v3h3" fill="none" stroke="#606060"/><circle cx="10.500" cy="11.500" r="3.300" fill="#2c8ce8" stroke="#1058b0" stroke-width=".8"/></svg><span class="t g gl" style="left:38px;top:619px">305765224</span><span class="t g" style="right:777px;top:619px">2018.03.15 13:28:37</span><span class="t g" style="right:708px;top:619px">buy</span><span class="t g" style="right:655px;top:619px">0.25</span><span class="t g" style="right:587px;top:619px">eurusd</span><span class="t g" style="right:512px;top:619px">1.23617</span><span class="t g" style="right:435.5px;top:619px">0.00000</span><span class="t g" style="right:359.5px;top:619px">0.00000</span><span class="t g" style="right:283px;top:619px">1.23615</span><span class="t g" style="right:208px;top:619px">-1.24</span><span class="t g" style="right:132px;top:619px">0.00</span><span class="t g" style="right:28px;top:619px">-0.50</span><svg style="left:1006px;top:623px" width="7" height="7" viewBox="0 0 7 7"><path d="M.7.700l5.600 5.600M6.300.700L.7 6.300" stroke="#909090" stroke-width="1.600"/></svg><div style="left:114px;top:536px;width:1px;height:100px;background:#c4c4c4"></div><div style="left:251px;top:536px;width:1px;height:100px;background:#c4c4c4"></div><div style="left:320px;top:536px;width:1px;height:100px;background:#c4c4c4"></div><div style="left:371px;top:536px;width:1px;height:100px;background:#c4c4c4"></div><div style="left:440px;top:536px;width:1px;height:100px;background:#c4c4c4"></div><div style="left:516px;top:536px;width:1px;height:100px;background:#c4c4c4"></div><div style="left:591px;top:536px;width:1px;height:100px;background:#c4c4c4"></div><div style="left:668px;top:536px;width:1px;height:100px;background:#c4c4c4"></div><div style="left:744px;top:536px;width:1px;height:100px;background:#c4c4c4"></div><div style="left:819px;top:536px;width:1px;height:100px;background:#c4c4c4"></div><div style="left:896px;top:536px;width:1px;height:100px;background:#c4c4c4"></div><div style="left:16px;top:556px;width:1004px;height:1px;background:#c8c8c8"></div><div style="left:16px;top:576px;width:1004px;height:1px;background:#c8c8c8"></div><div style="left:16px;top:596px;width:1004px;height:1px;background:#c8c8c8"></div><div style="left:16px;top:616px;width:1004px;height:1px;background:#c8c8c8"></div><div style="left:16px;top:636px;width:1004px;height:20px;background:#c8c8c8"></div>
<svg style="left:19px;top:639px" width="12" height="13" viewBox="0 0 12 13"><rect x=".5" y=".5" width="11" height="12" rx="1.500" fill="#fff" stroke="#808080"/><path d="M6 10.500L2.500 6.800h2.200V3h2.600v3.800h2.200z" fill="#e8401c" stroke="#a82000" stroke-width=".6"/></svg>
<span class="t" style="left:38px;top:639px;font-weight:bold;letter-spacing:.01px">Balance: 5,379.58 USD  Equity: 5,362.88  Margin: 61.80  Free margin: 5,301.08  Margin level: 8677.48%</span>
<span class="t" style="right:28px;top:639px;font-weight:bold">-16.70</span>
<div style="left:14px;top:679px;width:1008px;height:22px;background:#f0f0f0"></div>
<div style="left:67px;top:679px;width:955px;height:1px;background:#000"></div>
<div style="left:15px;top:679px;width:1px;height:22px;background:#a0a0a0"></div><div style="left:18px;top:679px;width:50px;height:20px;background:#fff;border:1px solid #000;border-top:0;box-shadow:1px 1px 0 #666"></div>
<span class="t" style="left:28px;top:682px">Trade</span>
<span class="t" style="left:78px;top:682px;color:#6e6e6e;letter-spacing:-0.4px">Exposure</span><div style="left:135px;top:683px;width:1px;height:13px;background:#606060"></div><span class="t" style="left:145px;top:682px;color:#6e6e6e">Account History</span><div style="left:241px;top:683px;width:1px;height:13px;background:#606060"></div><span class="t" style="left:251px;top:682px;color:#6e6e6e">News</span><div style="left:297px;top:683px;width:1px;height:13px;background:#606060"></div><span class="t" style="left:307px;top:682px;color:#6e6e6e">Alerts</span><div style="left:347px;top:683px;width:1px;height:13px;background:#606060"></div><span class="t" style="left:357px;top:682px;color:#6e6e6e">Mailbox</span><div style="left:421px;top:683px;width:1px;height:13px;background:#606060"></div><span class="t" style="left:431px;top:682px;color:#6e6e6e">Market</span><div style="left:490px;top:683px;width:1px;height:13px;background:#606060"></div><span class="t" style="left:500px;top:682px;color:#6e6e6e">Signals</span><div style="left:547px;top:683px;width:1px;height:13px;background:#606060"></div><span class="t" style="left:557px;top:682px;color:#6e6e6e;letter-spacing:-0.45px">Code Base</span><div style="left:622px;top:683px;width:1px;height:13px;background:#606060"></div><span class="t" style="left:632px;top:682px;color:#6e6e6e;letter-spacing:-0.5px">Experts</span><div style="left:678px;top:683px;width:1px;height:13px;background:#606060"></div><span class="t" style="left:688px;top:682px;color:#6e6e6e">Journal</span><div style="left:738px;top:683px;width:1px;height:13px;background:#606060"></div><span class="t" style="left:282px;top:688px;color:#e80000;font-size:9.5px;font-weight:bold;letter-spacing:-.2px;line-height:10px">4</span><span class="t" style="left:400px;top:688px;color:#e80000;font-size:9.5px;font-weight:bold;letter-spacing:-.2px;line-height:10px">18</span><span class="t" style="left:470px;top:688px;color:#e80000;font-size:9.5px;font-weight:bold;letter-spacing:-.2px;line-height:10px">34</span></div>
<div class="abs" id="status">
<div style="left:0;top:704px;width:1024px;height:1px;background:#b4b4b4"></div><div style="left:0;top:705px;width:1024px;height:1px;background:#fff"></div>
<span class="t" style="left:2px;top:711px;letter-spacing:-.35px">For Help, press F1</span>
<span class="t" style="left:336px;top:711px;letter-spacing:-.1px">Default</span>
<div style="left:330px;top:709px;width:1px;height:18px;background:#a0a0a0"></div><div style="left:446px;top:709px;width:1px;height:18px;background:#a0a0a0"></div><div style="left:548px;top:709px;width:1px;height:18px;background:#a0a0a0"></div><div style="left:619px;top:709px;width:1px;height:18px;background:#a0a0a0"></div><div style="left:690px;top:709px;width:1px;height:18px;background:#a0a0a0"></div><div style="left:758px;top:709px;width:1px;height:18px;background:#a0a0a0"></div><div style="left:828px;top:709px;width:1px;height:18px;background:#a0a0a0"></div><div style="left:894px;top:709px;width:1px;height:18px;background:#a0a0a0"></div><svg style="left:900px;top:711px" width="23" height="13" viewBox="0 0 23 13"><rect x="0.6" y="0" width="1.500" height="9.5" fill="#3c6c00"/><rect x="0.6" y="9.5" width="1.500" height="3.5" fill="#a80000"/><rect x="3.1" y="0" width="1.500" height="8.6" fill="#3c6c00"/><rect x="3.1" y="8.6" width="1.500" height="4.4" fill="#a80000"/><rect x="5.6" y="0" width="1.500" height="7.7" fill="#3c6c00"/><rect x="5.6" y="7.7" width="1.500" height="5.3" fill="#a80000"/><rect x="8.1" y="0" width="1.500" height="6.8" fill="#3c6c00"/><rect x="8.1" y="6.8" width="1.500" height="6.2" fill="#a80000"/><rect x="10.6" y="0" width="1.500" height="5.9" fill="#3c6c00"/><rect x="10.6" y="5.9" width="1.500" height="7.1" fill="#a80000"/><rect x="13.1" y="0" width="1.500" height="5.0" fill="#3c6c00"/><rect x="13.1" y="5.0" width="1.500" height="8.0" fill="#a80000"/><rect x="15.6" y="0" width="1.500" height="4.1" fill="#3c6c00"/><rect x="15.6" y="4.1" width="1.500" height="8.9" fill="#a80000"/><rect x="18.1" y="0" width="1.500" height="3.2" fill="#3c6c00"/><rect x="18.1" y="3.2" width="1.500" height="9.8" fill="#a80000"/><rect x="20.6" y="0" width="1.500" height="2.3" fill="#3c6c00"/><rect x="20.6" y="2.3" width="1.500" height="10.7" fill="#a80000"/></svg><span class="t" style="left:927px;top:711px;letter-spacing:-.1px">207/3 kb</span>
</div>
<div class="abs" id="taskbar">
<div style="left:0;top:727px;width:1024px;height:1px;background:#e8e8e8"></div>
<div style="left:0;top:728px;width:1024px;height:40px;background:linear-gradient(90deg,#0e0b14 0,#120e1a 120px,#1a1626 240px,#181e1a 400px,#1a1624 560px,#181420 700px,#15111c 860px,#0f0d12 960px,#0a0a0a 1024px);overflow:hidden"><svg style="left:0;top:0" width="1024" height="40"><defs><radialGradient id="tb0"><stop offset="0" stop-color="#7868c0" stop-opacity="0.85"/><stop offset=".5" stop-color="#7868c0" stop-opacity="0.47"/><stop offset="1" stop-color="#7868c0" stop-opacity="0"/></radialGradient><radialGradient id="tb1"><stop offset="0" stop-color="#6858b0" stop-opacity="0.7"/><stop offset=".5" stop-color="#6858b0" stop-opacity="0.39"/><stop offset="1" stop-color="#6858b0" stop-opacity="0"/></radialGradient><radialGradient id="tb2"><stop offset="0" stop-color="#b83848" stop-opacity="0.75"/><stop offset=".5" stop-color="#b83848" stop-opacity="0.41"/><stop offset="1" stop-color="#b83848" stop-opacity="0"/></radialGradient><radialGradient id="tb3"><stop offset="0" stop-color="#8a3040" stop-opacity="0.45"/><stop offset=".5" stop-color="#8a3040" stop-opacity="0.25"/><stop offset="1" stop-color="#8a3040" stop-opacity="0"/></radialGradient><radialGradient id="tb4"><stop offset="0" stop-color="#7464c0" stop-opacity="0.75"/><stop offset=".5" stop-color="#7464c0" stop-opacity="0.41"/><stop offset="1" stop-color="#7464c0" stop-opacity="0"/></radialGradient><radialGradient id="tb5"><stop offset="0" stop-color="#6c5cb4" stop-opacity="0.8"/><stop offset=".5" stop-color="#6c5cb4" stop-opacity="0.44"/><stop offset="1" stop-color="#6c5cb4" stop-opacity="0"/></radialGradient><radialGradient id="tb6"><stop offset="0" stop-color="#c04840" stop-opacity="0.75"/><stop offset=".5" stop-color="#c04840" stop-opacity="0.41"/><stop offset="1" stop-color="#c04840" stop-opacity="0"/></radialGradient><radialGradient id="tb7"><stop offset="0" stop-color="#7868c4" stop-opacity="0.85"/><stop offset=".5" stop-color="#7868c4" stop-opacity="0.47"/><stop offset="1" stop-color="#7868c4" stop-opacity="0"/></radialGradient><radialGradient id="tb8"><stop offset="0" stop-color="#7060b8" stop-opacity="0.8"/><stop offset=".5" stop-color="#7060b8" stop-opacity="0.44"/><stop offset="1" stop-color="#7060b8" stop-opacity="0"/></radialGradient><radialGradient id="tb9"><stop offset="0" stop-color="#6858b4" stop-opacity="0.8"/><stop offset=".5" stop-color="#6858b4" stop-opacity="0.44"/><stop offset="1" stop-color="#6858b4" stop-opacity="0"/></radialGradient><radialGradient id="tb10"><stop offset="0" stop-color="#5c4cac" stop-opacity="0.65"/><stop offset=".5" stop-color="#5c4cac" stop-opacity="0.36"/><stop offset="1" stop-color="#5c4cac" stop-opacity="0"/></radialGradient><radialGradient id="tb11"><stop offset="0" stop-color="#4c4088" stop-opacity="0.6"/><stop offset=".5" stop-color="#4c4088" stop-opacity="0.33"/><stop offset="1" stop-color="#4c4088" stop-opacity="0"/></radialGradient><radialGradient id="tb12"><stop offset="0" stop-color="#24342a" stop-opacity="0.8"/><stop offset=".5" stop-color="#24342a" stop-opacity="0.44"/><stop offset="1" stop-color="#24342a" stop-opacity="0"/></radialGradient><radialGradient id="tb13"><stop offset="0" stop-color="#283828" stop-opacity="0.6"/><stop offset=".5" stop-color="#283828" stop-opacity="0.33"/><stop offset="1" stop-color="#283828" stop-opacity="0"/></radialGradient><radialGradient id="tb14"><stop offset="0" stop-color="#2c3c30" stop-opacity="0.5"/><stop offset=".5" stop-color="#2c3c30" stop-opacity="0.28"/><stop offset="1" stop-color="#2c3c30" stop-opacity="0"/></radialGradient><radialGradient id="tb15"><stop offset="0" stop-color="#241a38" stop-opacity="0.5"/><stop offset=".5" stop-color="#241a38" stop-opacity="0.25"/><stop offset="1" stop-color="#3c2e58" stop-opacity="0"/></radialGradient><radialGradient id="tb16"><stop offset="0" stop-color="#1c1430" stop-opacity="0.5"/><stop offset=".5" stop-color="#1c1430" stop-opacity="0.25"/><stop offset="1" stop-color="#2e2244" stop-opacity="0"/></radialGradient><radialGradient id="tb17"><stop offset="0" stop-color="#30243e" stop-opacity="0.6"/><stop offset=".5" stop-color="#30243e" stop-opacity="0.33"/><stop offset="1" stop-color="#30243e" stop-opacity="0"/></radialGradient><radialGradient id="tb18"><stop offset="0" stop-color="#241c34" stop-opacity="0.6"/><stop offset=".5" stop-color="#241c34" stop-opacity="0.33"/><stop offset="1" stop-color="#241c34" stop-opacity="0"/></radialGradient></defs><ellipse cx="296" cy="19" rx="39" ry="30" fill="url(#tb0)"/><ellipse cx="268" cy="12" rx="26" ry="20" fill="url(#tb1)"/><ellipse cx="325" cy="24" rx="16" ry="12" fill="url(#tb2)"/><ellipse cx="340" cy="10" rx="18" ry="14" fill="url(#tb3)"/><ellipse cx="461" cy="26" rx="22" ry="17" fill="url(#tb4)"/><ellipse cx="495" cy="7" rx="29" ry="22" fill="url(#tb5)"/><ellipse cx="523" cy="23" rx="17" ry="13" fill="url(#tb6)"/><ellipse cx="591" cy="19" rx="34" ry="26" fill="url(#tb7)"/><ellipse cx="640" cy="13" rx="29" ry="22" fill="url(#tb8)"/><ellipse cx="772" cy="20" rx="36" ry="28" fill="url(#tb9)"/><ellipse cx="806" cy="16" rx="23" ry="18" fill="url(#tb10)"/><ellipse cx="705" cy="22" rx="31" ry="24" fill="url(#tb11)"/><ellipse cx="400" cy="20" rx="44" ry="34" fill="url(#tb12)"/><ellipse cx="440" cy="8" rx="26" ry="20" fill="url(#tb13)"/><ellipse cx="560" cy="12" rx="21" ry="16" fill="url(#tb14)"/><ellipse cx="130" cy="17" rx="65" ry="50" fill="url(#tb15)"/><ellipse cx="50" cy="17" rx="47" ry="36" fill="url(#tb16)"/><ellipse cx="215" cy="17" rx="44" ry="34" fill="url(#tb17)"/><ellipse cx="870" cy="17" rx="39" ry="30" fill="url(#tb18)"/></svg></div>
<div style="left:0;top:728px;width:1024px;height:40px;background:linear-gradient(180deg,rgba(255,255,255,.22) 0,rgba(255,255,255,.06) 2px,rgba(0,0,0,0) 40%,rgba(0,0,0,.25) 100%)"></div>
<!-- start orb -->
<svg style="left:8px;top:729px" width="38" height="38" viewBox="0 0 38 38"><defs><radialGradient id="orb" cx=".5" cy=".95" r=".85"><stop offset="0" stop-color="#48d0fc"/><stop offset=".35" stop-color="#1878c4"/><stop offset=".7" stop-color="#0c488c"/><stop offset="1" stop-color="#08244c"/></radialGradient><linearGradient id="orbh" x1="0" y1="0" x2="0" y2="1"><stop offset="0" stop-color="#fff" stop-opacity=".6"/><stop offset="1" stop-color="#fff" stop-opacity=".1"/></linearGradient></defs><circle cx="19" cy="19" r="18" fill="url(#orb)" stroke="#a8c8e8" stroke-opacity=".6" stroke-width="1.200"/><path d="M2.500 17a16.500 16.500 0 0 1 33 0q-16.500 5-33 0z" fill="url(#orbh)"/><g transform="translate(19 19) scale(1.35) translate(-18.200 -19.200)"><path d="M11.500 12.500q3.500-2 6.500 0l-1.300 6q-3-1.800-6.500 0z" fill="#f0602c"/><path d="M19.300 12.800q3 1.700 6.500 0l-1.300 6q-3.300 1.700-6.500 0z" fill="#7cc42c"/><path d="M9.800 19.800q3.500-1.800 6.500 0l-1.300 6q-3-1.800-6.500 0z" fill="#2c9cf0"/><path d="M17.600 20.200q3 1.700 6.500 0l-1.300 6q-3.300 1.700-6.500 0z" fill="#fcc428"/></g></svg>
<!-- chrome -->
<svg style="left:74px;top:733px" width="30" height="30" viewBox="0 0 30 30"><circle cx="15" cy="15" r="15" fill="#e8402c"/><path d="M15 15L2 7.500A15 15 0 0 0 13 29.900L20 17z" fill="#2ca84c"/><path d="M15 15h15A15 15 0 0 1 13 29.900z" fill="#fcc820"/><path d="M15 8.500h13.500A15 15 0 0 1 30 15H15z" fill="#fcc820"/><path d="M28.500 8.500A15 15 0 0 1 13 29.900l7.500-12.500z" fill="#fcc820"/><circle cx="15" cy="15" r="7" fill="#fff"/><circle cx="15" cy="15" r="5.500" fill="#3c84f0"/></svg>
<!-- mt4 button -->
<div style="left:122px;top:729px;width:58px;height:38px;border:1px solid rgba(255,255,255,.55);border-radius:3px;background:linear-gradient(135deg,rgba(240,236,246,.78) 0,rgba(205,198,215,.68) 45%,rgba(150,140,165,.6) 55%,rgba(170,160,188,.6) 100%)"></div>
<svg style="left:134px;top:734px" width="34" height="30" viewBox="0 0 34 30"><rect x="3.500" y=".5" width="19" height="15" fill="#f4f8ff" stroke="#3c7cc8"/><rect x="4" y="1" width="18" height="2.500" fill="#4c8cd8"/><rect x="12.500" y="7.500" width="19" height="16" fill="#f4f8ff" stroke="#3c7cc8"/><rect x="13" y="8" width="18" height="2.500" fill="#4c8cd8"/><path d="M15 19v-6M17.500 21v-7M20 18v-5M22.500 20v-6M25 17v-5M27.500 19v-6" stroke="#2c5ca8" stroke-width="1.300"/><path d="M5 5v8M5 5h2" stroke="#2c5ca8"/><circle cx="9.500" cy="14.500" r="5.200" fill="#f0b888" stroke="#a86430" stroke-width=".8"/><path d="M4.300 13.500q1-5 5.200-5t5.200 5q-2-2.500-5.200-2.500T4.300 13.500z" fill="#b85c20"/><path d="M1 29q0-9 8.500-9t8.500 9z" fill="#4ca82c" stroke="#2c7410" stroke-width=".8"/><path d="M7 20.500l2.500 4 2.500-4" fill="#fff"/></svg>
<!-- calc button -->
<div style="left:184px;top:729px;width:58px;height:38px;border:1px solid rgba(255,255,255,.4);border-radius:3px;background:linear-gradient(135deg,rgba(190,182,205,.6) 0,rgba(120,110,140,.42) 40%,rgba(50,40,70,.4) 55%,rgba(70,58,96,.45) 100%)"></div>
<svg style="left:201px;top:734px" width="24" height="30" viewBox="0 0 24 30"><rect x=".5" y=".5" width="22" height="29" rx="2" fill="#8cc8f4" stroke="#3c84c8"/><rect x="1.500" y="1.500" width="20" height="3" fill="#f8c868"/><rect x="3" y="6" width="17" height="7.500" fill="#e8f4fc" stroke="#6ca4d8" stroke-width=".8"/><text x="13" y="12.500" font-family="Liberation Mono,monospace" font-size="7" font-weight="bold" fill="#406080">0</text><g fill="#f4faff"><rect x="3" y="15.500" width="3" height="2.500"/><rect x="7.500" y="15.500" width="3" height="2.500"/><rect x="12" y="15.500" width="3" height="2.500"/><rect x="3" y="19.500" width="3" height="2.500"/><rect x="7.500" y="19.500" width="3" height="2.500"/><rect x="12" y="19.500" width="3" height="2.500"/><rect x="3" y="23.500" width="3" height="2.500"/><rect x="7.500" y="23.500" width="3" height="2.500"/><rect x="12" y="23.500" width="3" height="2.500"/><rect x="16.500" y="15.500" width="3" height="2.500"/></g><rect x="16.500" y="19.500" width="3" height="6.500" fill="#f8a848"/></svg>
<!-- tray -->
<span class="t" style="left:815px;top:739px;color:#fff;font-size:12px;letter-spacing:-.7px">EN</span>
<svg style="left:846px;top:747px" width="9" height="5" viewBox="0 0 9 5"><path d="M0 5h9L4.500 0z" fill="#fff"/></svg>
<svg style="left:867px;top:741px" width="17" height="16" viewBox="0 0 17 16"><path d="M1.500 1v14" stroke="#fff" stroke-width="1.500"/><path d="M2.500 1.500q3-1.500 5.500 0t5.500 0v7q-3 1.500-5.500 0t-5.500 0z" fill="#f0f0f0" fill-opacity=".9" stroke="#fff" stroke-width=".8"/><circle cx="11.500" cy="10.500" r="4.600" fill="#e82020" stroke="#a00808" stroke-width=".6"/><path d="M9.500 8.500l4 4M13.500 8.500l-4 4" stroke="#fff" stroke-width="1.500"/></svg>
<svg style="left:891px;top:741px" width="16" height="16" viewBox="0 0 16 16"><path d="M2.500 0v4M5.500 0v4M1 4h6v3q0 1.500-1.500 1.500h-3Q1 8.500 1 7zM4 8.500v6" stroke="#fff" stroke-width="1.200" fill="#ddd"/><rect x="5.500" y="4.500" width="10" height="7.500" fill="#282838" stroke="#fff" stroke-width="1.300"/><path d="M10.500 12v2.500M7 15h7" stroke="#fff" stroke-width="1.300"/></svg>
<svg style="left:917px;top:742px" width="13" height="15" viewBox="0 0 13 15"><path d="M.5 5h3L7.500.500v14L3.500 10h-3z" fill="#fff"/><path d="M10 4.500q2 3 0 6" fill="none" stroke="#d0d0d0" stroke-width="1.100"/></svg>
<span class="t" style="left:949px;top:734px;color:#fff;font-size:12px;letter-spacing:-.2px">12:29 PM</span>
<span class="t" style="left:947px;top:751px;color:#fff;font-size:12px;letter-spacing:-.1px">3/15/2018</span>
<div style="left:1010px;top:729px;width:14px;height:39px;border:1px solid rgba(255,255,255,.35);border-right:0;background:linear-gradient(90deg,rgba(255,255,255,.22),rgba(255,255,255,.08) 40%,rgba(0,0,0,.2))"></div>
</div>
</body></html>
